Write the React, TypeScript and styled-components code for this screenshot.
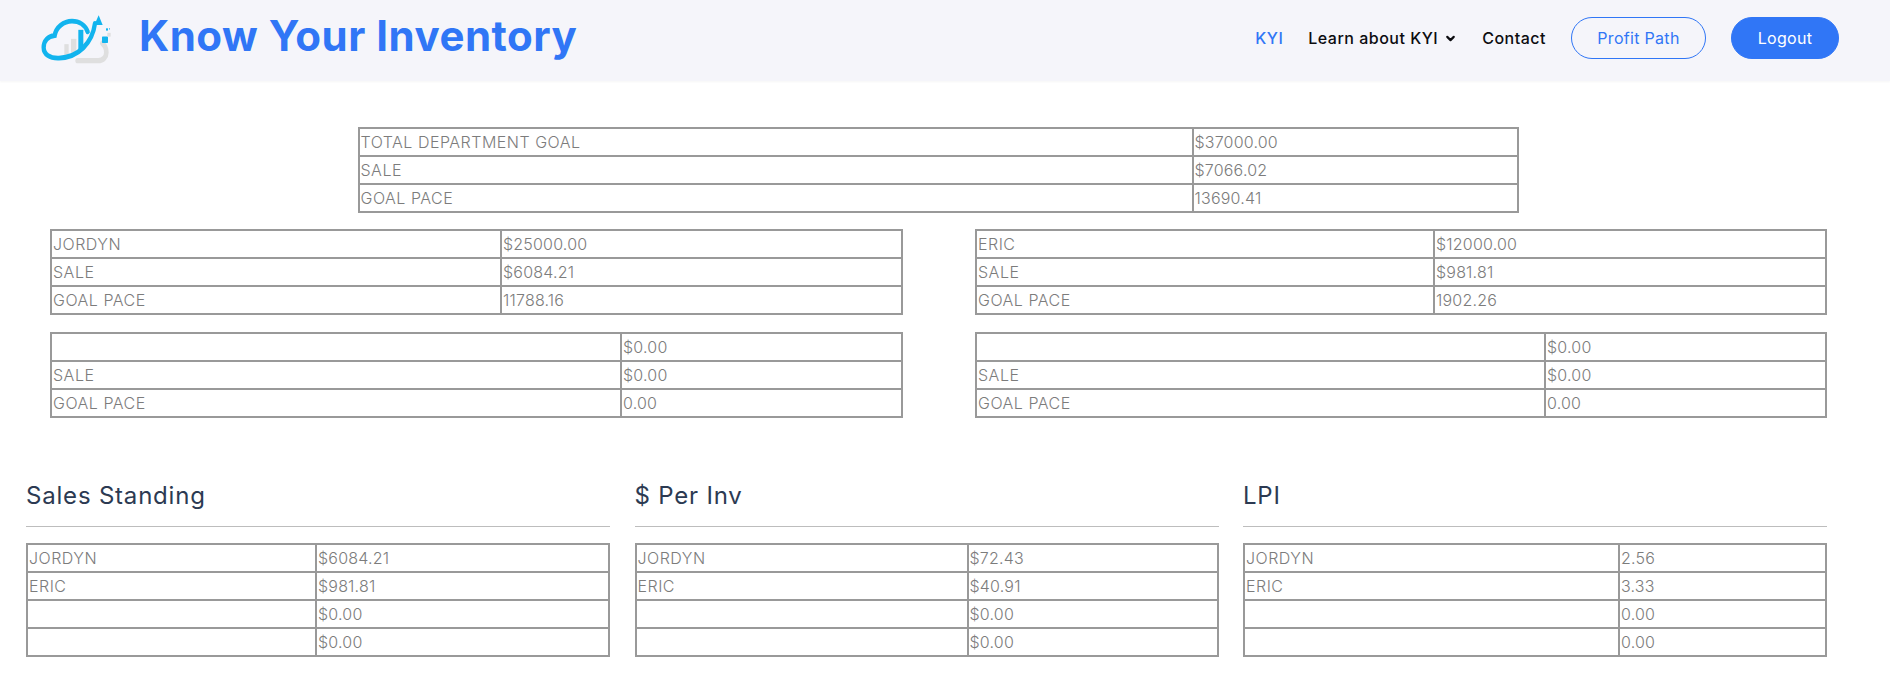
import styled, { createGlobalStyle } from 'styled-components';
import { ChevronDown } from 'lucide-react';

const GlobalStyle = createGlobalStyle`
  html, body {
    margin: 0;
    padding: 0;
    background: #fff;
    font-family: Inter, "Open Sans", sans-serif;
  }
`;

const Header = styled.header`
  display: flex;
  align-items: center;
  justify-content: space-between;
  box-sizing: border-box;
  height: 81px;
  padding: 0 51px 4px 36px;
  background: #f5f5fa;
  box-shadow: 0 1px 2px rgba(0, 0, 0, 0.04);
`;

const Brand = styled.a`
  display: flex;
  align-items: center;
  gap: 19px;
`;

const BrandName = styled.span`
  padding-bottom: 6px;
  font-size: 42px;
  font-weight: 700;
  letter-spacing: 0.5px;
  color: #3076f6;
`;

const Nav = styled.nav`
  display: flex;
  align-items: center;
  gap: 25px;
  padding-bottom: 1px;
`;

const NavLink = styled.a<{ $active?: boolean }>`
  display: flex;
  align-items: center;
  gap: 6px;
  font-size: 16px;
  font-weight: 500;
  letter-spacing: 0.5px;
  color: ${({ $active }) => ($active ? '#3076f6' : '#0c0c10')};
`;

const PillButton = styled.a<{ $filled?: boolean }>`
  display: flex;
  align-items: center;
  justify-content: center;
  height: 42px;
  box-sizing: border-box;
  width: ${({ $filled }) => ($filled ? '108px' : '135px')};
  border: 1px solid #3076f6;
  border-radius: 21px;
  font-size: 16px;
  font-weight: 400;
  letter-spacing: 0.3px;
  color: ${({ $filled }) => ($filled ? '#fff' : '#3076f6')};
  background: ${({ $filled }) => ($filled ? '#3076f6' : 'transparent')};
`;

const Main = styled.main`
  padding: 46px 63px 0 26px;
`;

const TopRow = styled.div`
  display: flex;
  justify-content: center;
  padding-left: 23px;
`;

const PairGrid = styled.div`
  display: grid;
  grid-template-columns: 853px 852px;
  justify-content: space-between;
  row-gap: 17px;
  margin: 16px 0 0 24px;
`;

const StandingGrid = styled.div`
  display: grid;
  grid-template-columns: repeat(3, 584px);
  justify-content: space-between;
  margin-top: 62px;
`;

const Heading = styled.h3`
  margin: 0 0 16px;
  padding-bottom: 14px;
  border-bottom: 1px solid #bdbdbd;
  font-size: 24px;
  font-weight: 400;
  letter-spacing: 0.8px;
  line-height: 32px;
  color: #2c3a52;
`;

const DataTable = styled.table<{ $width?: number }>`
  width: ${({ $width }) => ($width ? `${$width}px` : '100%')};
  table-layout: fixed;
  border-collapse: collapse;
  font-size: 16px;
  font-weight: 300;
  color: #7c7c7c;
`;

const Cell = styled.td<{ $value?: boolean }>`
  height: 26px;
  padding: 0 1px;
  border: 2px solid #999;
  line-height: 24px;
  letter-spacing: ${({ $value }) => ($value ? '0.2px' : '0.5px')};
`;

const Logo = () => (
  <svg width="84" height="56" viewBox="0 0 252 168" fill="none">
    <g transform="scale(1 1.13)">
      <path d="M125 132h62c14 0 24-10 24-22 0-10-4-18-12-24" stroke="#dfdfdf" strokeWidth="14" strokeLinecap="round" />
      <rect x="85" y="88" width="13" height="38" fill="#dfdfdf" />
      <rect x="105" y="74" width="16" height="44" fill="#dfdfdf" />
      <rect x="127" y="50" width="15" height="54" fill="#12b4ee" />
      <path
        d="M155 55C148 38 130 27 108 27c-25 0-48 16-52 38-20 2-33 14-33 32 0 18 18 29 46 28 58-2 100-40 108-92"
        stroke="#12b4ee"
        strokeWidth="13"
        strokeLinecap="round"
      />
      <path d="M188 11l12 26h-25z" fill="#12b4ee" />
      <rect x="198" y="68" width="18" height="17" rx="2" fill="#12b4ee" />
      <rect x="214" y="58" width="10" height="10" fill="#dfdfdf" />
      <rect x="210" y="46" width="6" height="6" fill="#12b4ee" />
      <rect x="219" y="46" width="3" height="3" fill="#12b4ee" />
    </g>
  </svg>
);

type Row = [string, string];

const StatTable = ({ rows, split, width }: { rows: Row[]; split: number; width?: number }) => (
  <DataTable $width={width}>
    <colgroup>
      <col width={split} />
      <col />
    </colgroup>
    <tbody>
      {rows.map(([label, value], i) => (
        <tr key={i}>
          <Cell>{label}</Cell>
          <Cell $value>{value}</Cell>
        </tr>
      ))}
    </tbody>
  </DataTable>
);

const goalRows = (name: string, goal: string, sale: string, pace: string): Row[] => [
  [name, goal],
  ['SALE', sale],
  ['GOAL PACE', pace],
];

const standings: { title: string; split: number; rows: Row[] }[] = [
  {
    title: 'Sales Standing',
    split: 289,
    rows: [['JORDYN', '$6084.21'], ['ERIC', '$981.81'], ['', '$0.00'], ['', '$0.00']],
  },
  {
    title: '$ Per Inv',
    split: 332,
    rows: [['JORDYN', '$72.43'], ['ERIC', '$40.91'], ['', '$0.00'], ['', '$0.00']],
  },
  {
    title: 'LPI',
    split: 375,
    rows: [['JORDYN', '2.56'], ['ERIC', '3.33'], ['', '0.00'], ['', '0.00']],
  },
];

export default function App() {
  return (
    <>
      <GlobalStyle />
      <Header>
        <Brand>
          <Logo />
          <BrandName>Know Your Inventory</BrandName>
        </Brand>
        <Nav>
          <NavLink $active>KYI</NavLink>
          <NavLink>
            Learn about KYI
            <ChevronDown size={13} strokeWidth={4} />
          </NavLink>
          <NavLink>Contact</NavLink>
          <PillButton>Profit Path</PillButton>
          <PillButton $filled>Logout</PillButton>
        </Nav>
      </Header>
      <Main>
        <TopRow>
          <StatTable
            width={1161}
            split={834}
            rows={goalRows('TOTAL DEPARTMENT GOAL', '$37000.00', '$7066.02', '13690.41')}
          />
        </TopRow>
        <PairGrid>
          <StatTable split={450} rows={goalRows('JORDYN', '$25000.00', '$6084.21', '11788.16')} />
          <StatTable split={458} rows={goalRows('ERIC', '$12000.00', '$981.81', '1902.26')} />
          <StatTable split={570} rows={goalRows('', '$0.00', '$0.00', '0.00')} />
          <StatTable split={569} rows={goalRows('', '$0.00', '$0.00', '0.00')} />
        </PairGrid>
        <StandingGrid>
          {standings.map((s) => (
            <section key={s.title}>
              <Heading>{s.title}</Heading>
              <StatTable split={s.split} rows={s.rows} />
            </section>
          ))}
        </StandingGrid>
      </Main>
    </>
  );
}
